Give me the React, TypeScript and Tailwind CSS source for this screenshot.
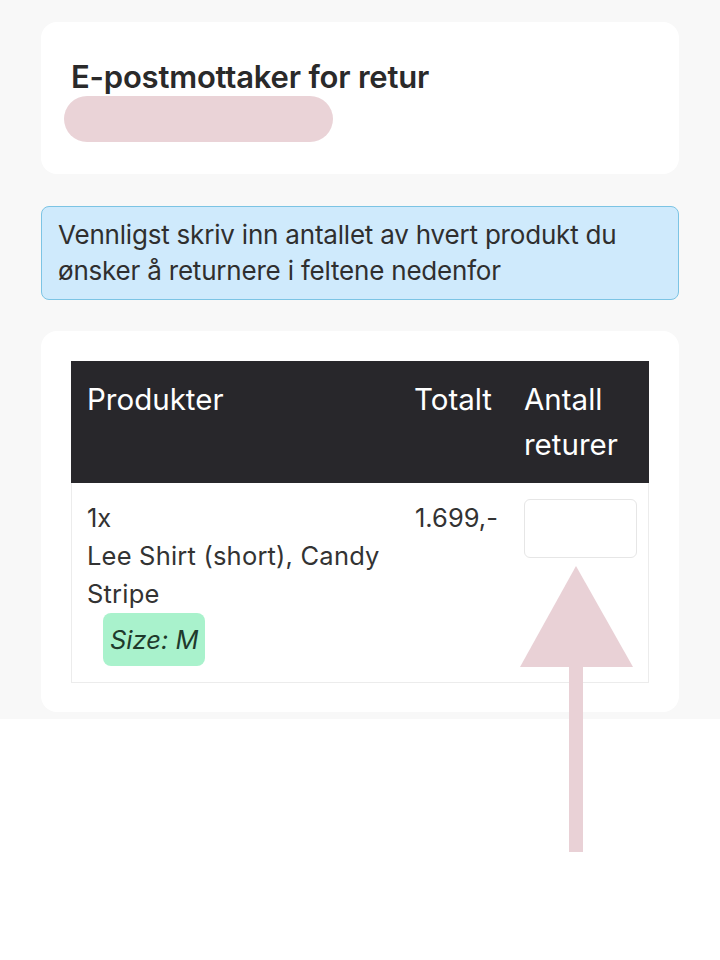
import React from "react";

export default function App() {
  return (
    <div className="relative min-h-[960px] w-[720px] bg-white text-[#2b2b2b]" style={{ fontFamily: "Inter, 'Noto Sans', sans-serif" }}>
      <div className="bg-[#f8f8f8] px-[41px] pt-[22px] pb-[7px]">
        <div className="rounded-[16px] bg-white px-[30px] pt-[37px] pb-[32px]">
          <h2 className="text-[31px] font-semibold leading-[36px] tracking-[-0.2px] text-[#2a2a2a]">E-postmottaker for retur</h2>
          <div className="-ml-[7px] mt-[1px] h-[46px] w-[269px] rounded-full bg-[#ead3d7]" />
        </div>

        <div className="mt-[32px] rounded-[8px] border border-[#7cc4e4] bg-[#cfeafc] px-[16px] py-[10px] text-[26px] leading-[36px] tracking-[-0.2px] text-[#2f2f2f]">
          Vennligst skriv inn antallet av hvert produkt du ønsker å returnere i feltene nedenfor
        </div>

        <div className="mt-[31px] rounded-[16px] bg-white p-[30px] pb-[29px]">
          <div className="grid grid-cols-[327px_110px_141px] bg-[#28272b] text-[29.5px] leading-[45px] text-white">
            <div className="px-[16px] py-[16px]">Produkter</div>
            <div className="py-[16px] pl-[16px]">Totalt</div>
            <div className="py-[16px] pl-[16px] pr-[10px]">Antall returer</div>
          </div>
          <div className="grid grid-cols-[327px_110px_141px] border border-t-0 border-[#ececec] text-[25.5px] leading-[38px] text-[#333]">
            <div className="px-[15px] py-[16px]">
              <div>1x</div>
              <div className="tracking-[0.2px]">Lee Shirt (short), Candy Stripe</div>
              <div className="ml-[16px] inline-block rounded-[8px] bg-[#a9f2cc] px-[7px] py-[8px] italic leading-[37px] text-[#1f3a2c]">Size: M</div>
            </div>
            <div className="py-[16px] pl-[16px]">1.699,-</div>
            <div className="py-[16px] pl-[15px] pr-[12px]">
              <div className="h-[59px] w-[113px] rounded-[6px] border border-[#e6e6e6] bg-white" />
            </div>
          </div>
        </div>
      </div>

      <svg className="absolute left-[518px] top-[564px]" width="118" height="290" viewBox="0 0 118 290">
        <polygon points="58,2 115,103 2,103" fill="#e9d1d6" />
        <rect x="51" y="102" width="14" height="186" fill="#e9d1d6" />
      </svg>
    </div>
  );
}
